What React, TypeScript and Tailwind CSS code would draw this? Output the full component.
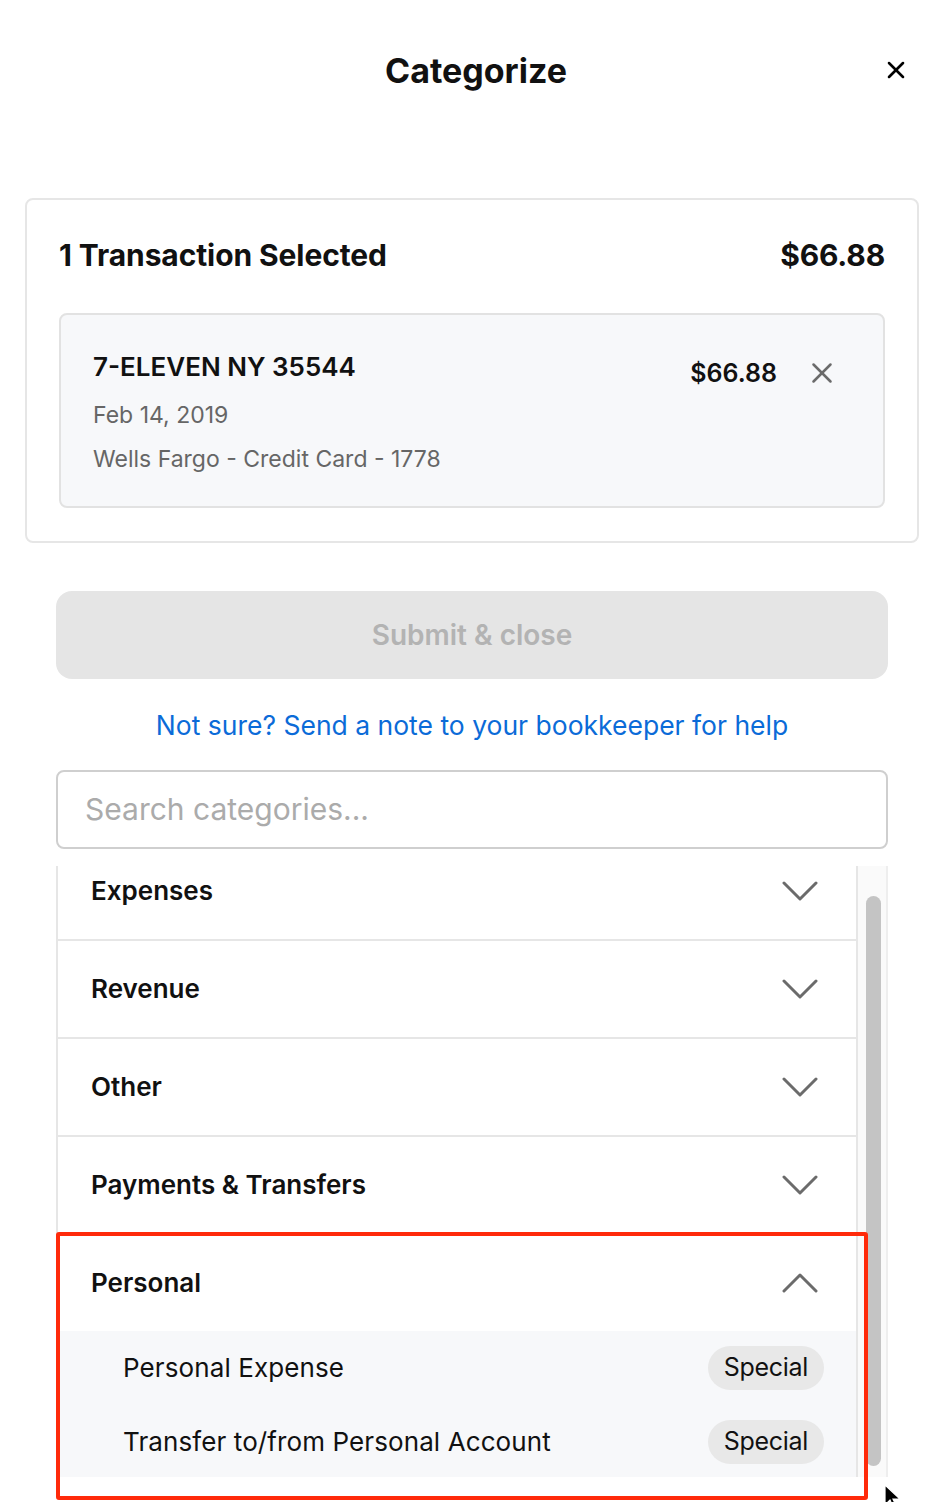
import { X } from 'lucide-react';

const categories = ['Expenses', 'Revenue', 'Other', 'Payments & Transfers'];

const personalItems = ['Personal Expense', 'Transfer to/from Personal Account'];

function Chevron({ up = false }: { up?: boolean }) {
  return (
    <svg width="36" height="20" viewBox="0 0 36 20" fill="none">
      <path
        d={up ? 'M2 18 L18 2 L34 18' : 'M2 2 L18 18 L34 2'}
        stroke="#6b6b6b"
        strokeWidth="3"
        strokeLinecap="round"
        strokeLinejoin="round"
      />
    </svg>
  );
}

export default function App() {
  return (
    <div
      className="relative w-[930px] h-[1502px] overflow-hidden bg-white text-[#111] pl-[25px] pr-[11px]"
      style={{ fontFamily: 'Inter, "Noto Sans", sans-serif' }}
    >
      {/* Header */}
      <header className="flex items-center justify-center h-[140px] pl-[8px]">
        <h1 className="text-[34px] font-bold">Categorize</h1>
      </header>
      <button className="absolute right-[20px] top-[56px] text-black">
        <X size={28} strokeWidth={2.2} />
      </button>

      {/* Selected transactions */}
      <section className="mt-[58px] rounded-lg border-2 border-[#e6e6e6] px-[32px] pt-[33px] pb-[33px]">
        <div className="flex items-center justify-between">
          <h2 className="text-[30px] font-bold tracking-[-0.1px]">1 Transaction Selected</h2>
          <span className="text-[30px] font-bold tracking-[-0.2px]">$66.88</span>
        </div>
        <div className="mt-[35px] flex justify-between rounded-lg border-2 border-[#e2e2e2] bg-[#f7f8fa] pl-[32px] pr-[44px] pt-[34px] pb-[33px]">
          <div>
            <div className="text-[26px] font-semibold leading-[36px]">7-ELEVEN NY 35544</div>
            <div className="mt-[16px] text-[23px] leading-[28px] text-[#666]">Feb 14, 2019</div>
            <div className="mt-[16px] text-[23px] leading-[28px] text-[#666]">
              Wells Fargo - Credit Card - 1778
            </div>
          </div>
          <div className="flex items-start gap-[28px] pt-[6px]">
            <span className="text-[25px] font-semibold leading-[36px]">$66.88</span>
            <X size={34} strokeWidth={1.8} className="text-[#6b6b6b] mt-[1px]" />
          </div>
        </div>
      </section>

      {/* Actions */}
      <div className="mx-[31px] mt-[48px]">
        <button
          disabled
          className="flex h-[88px] w-full items-center justify-center rounded-2xl bg-[#e5e5e5] text-[28px] font-semibold text-[#b3b3b3]"
        >
          Submit &amp; close
        </button>
        <div className="mt-[27px] text-center text-[26.5px] text-[#0b6bd8]">
          Not sure? Send a note to your bookkeeper for help
        </div>
        <div className="mt-[24px] flex h-[79px] items-center rounded-lg border-2 border-[#cfcfcf] px-[27px] text-[30px] text-[#ababab]">
          Search categories...
        </div>
      </div>

      {/* Category list */}
      <div className="mx-[31px] mt-[17px] flex h-[611px]">
        <div className="flex-1 overflow-hidden border-x-2 border-[#e6e6e6]">
          <div className="-mt-[23px]">
            {categories.map((c) => (
              <div
                key={c}
                className="flex h-[98px] items-center justify-between border-b-2 border-[#e6e6e6] pl-[33px] pr-[38px]"
              >
                <span className="text-[26px] font-semibold">{c}</span>
                <Chevron />
              </div>
            ))}
            <div className="flex h-[96px] items-center justify-between pl-[33px] pr-[38px]">
              <span className="text-[26px] font-semibold">Personal</span>
              <Chevron up />
            </div>
            <div className="bg-[#f7f8fa] pb-[4px]">
              {personalItems.map((p) => (
                <div key={p} className="flex h-[74px] items-center justify-between pl-[65px] pr-[32px]">
                  <span className="text-[26px] tracking-[0.1px]">{p}</span>
                  <span className="rounded-full bg-[#e8e8e8] px-[16px] py-[3px] text-[25px] tracking-[-0.3px]">Special</span>
                </div>
              ))}
            </div>
          </div>
        </div>
        {/* scrollbar */}
        <div className="w-[30px] bg-[#fafafa] border-r-2 border-[#eeeeee] pt-[30px] pl-[8px] pr-[5px] pb-[10px]">
          <div className="h-[570px] rounded-full bg-[#c4c4c4]" />
        </div>
      </div>

      {/* highlight */}
      <div className="absolute left-[56px] top-[1232px] h-[268px] w-[812px] rounded-[3px] border-[4px] border-[#ff2a0a]" />

      {/* cursor */}
      <svg className="absolute left-[884px] top-[1484px]" width="20" height="26" viewBox="0 0 20 26">
        <path d="M1 1 L1 21 L6 16 L10 25 L13 23.5 L9 15 L16 15 Z" fill="#000" stroke="#fff" strokeWidth="1.2" />
      </svg>
    </div>
  );
}
